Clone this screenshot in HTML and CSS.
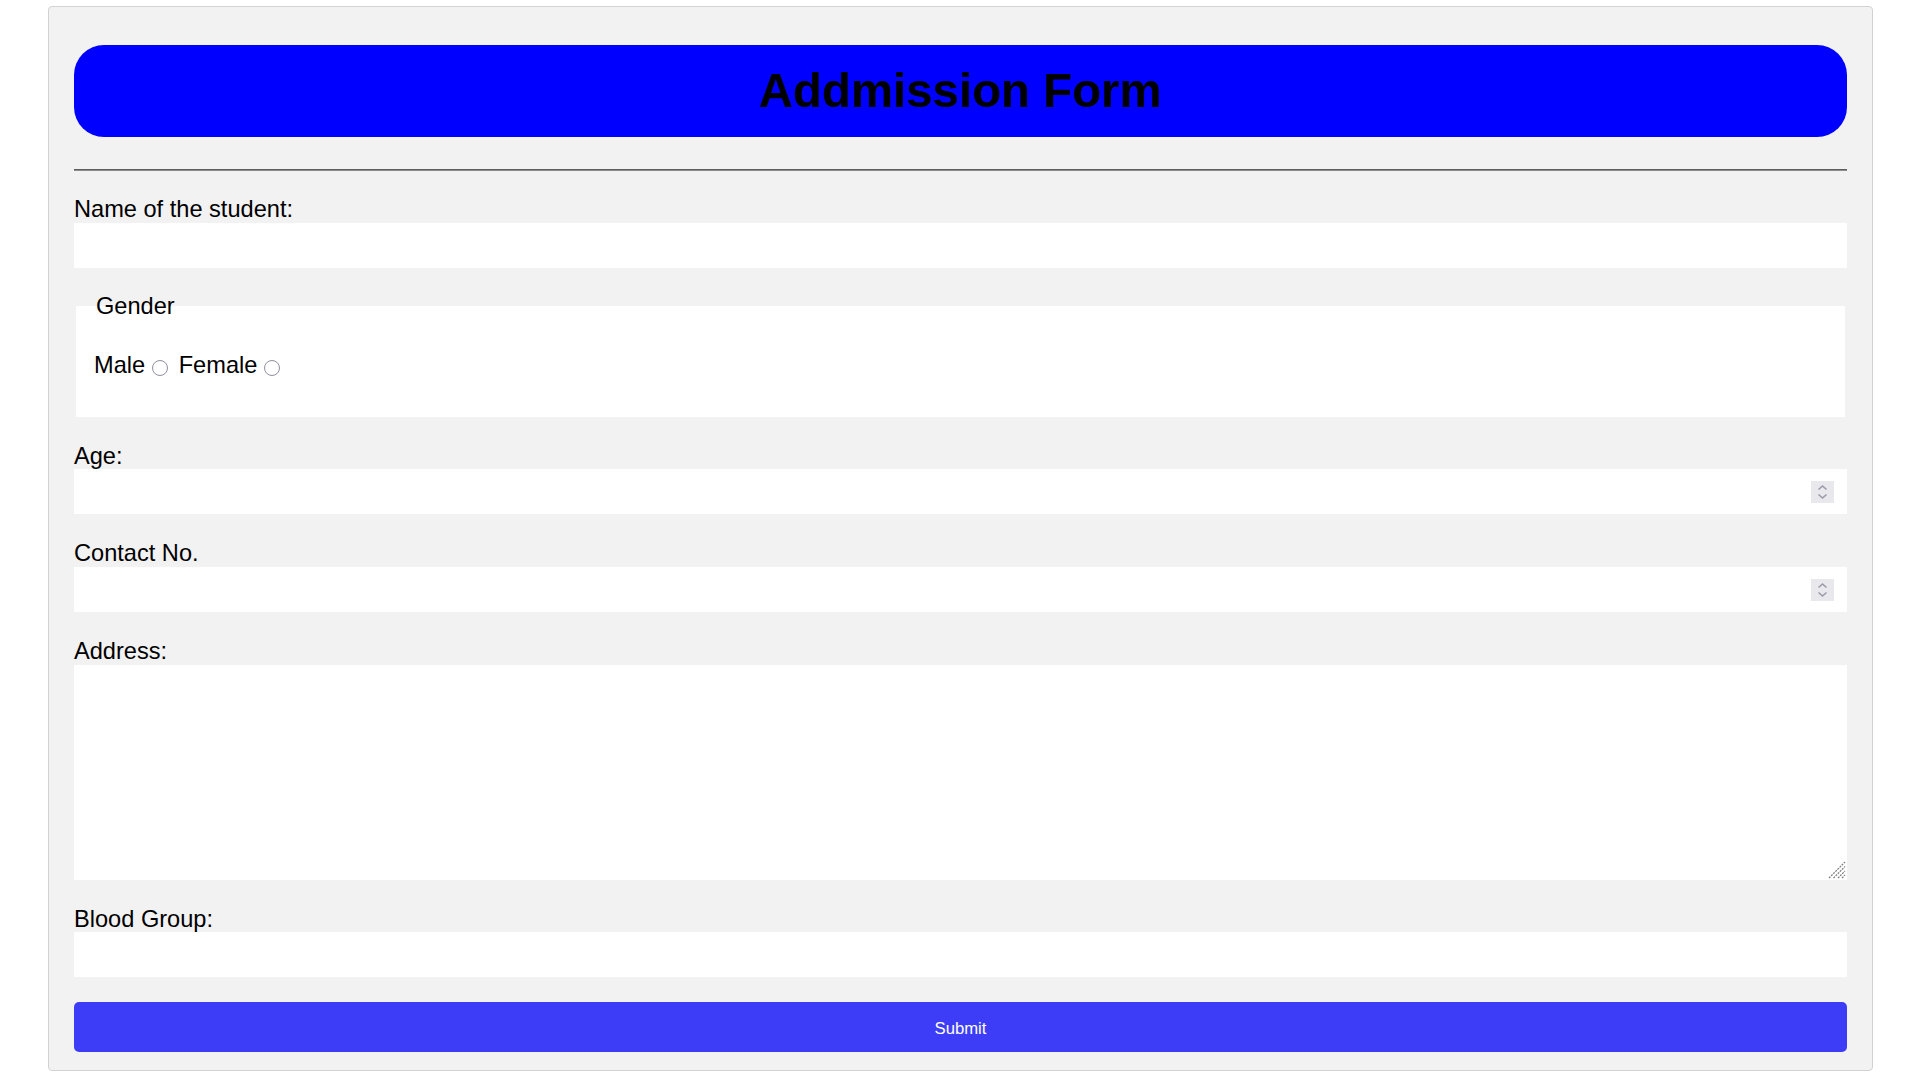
FILE: index.html
```html
<!DOCTYPE html>
<html lang="en">
<head>
<meta charset="utf-8">
<title>Addmission Form</title>
<link rel="stylesheet" href="styles.css">
</head>
<body>
<div class="container">
  <h1 class="title">Addmission Form</h1>
  <hr class="divider">
  <form class="form">
    <label class="field-label" for="name">Name of the student:</label>
    <input class="field" type="text" id="name">

    <fieldset class="gender">
      <legend class="gender-legend">Gender</legend>
      <div class="gender-row">Male<input class="radio" type="radio" name="gender" value="male"> Female<input class="radio" type="radio" name="gender" value="female"></div>
    </fieldset>

    <label class="field-label" for="age">Age:</label>
    <div class="num-wrap">
      <input class="field num" type="number" id="age">
      <span class="spin"><svg width="23" height="22" viewBox="0 0 23 22"><path d="M7.5 8.5 L11.5 5 L15.5 8.5" fill="none" stroke="#9b9ba8" stroke-width="1.6"/><path d="M7.5 13.5 L11.5 17 L15.5 13.5" fill="none" stroke="#9b9ba8" stroke-width="1.6"/></svg></span>
    </div>

    <label class="field-label" for="contact">Contact No.</label>
    <div class="num-wrap">
      <input class="field num" type="number" id="contact">
      <span class="spin"><svg width="23" height="22" viewBox="0 0 23 22"><path d="M7.5 8.5 L11.5 5 L15.5 8.5" fill="none" stroke="#9b9ba8" stroke-width="1.6"/><path d="M7.5 13.5 L11.5 17 L15.5 13.5" fill="none" stroke="#9b9ba8" stroke-width="1.6"/></svg></span>
    </div>

    <label class="field-label" for="address">Address:</label>
    <div class="area-wrap">
      <textarea class="area" id="address"></textarea>
      <span class="grip"><svg width="18" height="18" viewBox="0 0 18 18"><g stroke="#7a7a7a" stroke-width="1.2" stroke-dasharray="2 1"><path d="M1 17 L17 1"/><path d="M5.5 17 L17 5.5"/><path d="M10 17 L17 10"/><path d="M14 17 L17 14"/></g></svg></span>
    </div>

    <label class="field-label" for="blood">Blood Group:</label>
    <input class="field" type="text" id="blood">

    <button class="submit" type="submit">Submit</button>
  </form>
</div>
</body>
</html>
```
FILE: styles.css
```css
html, body {
  margin: 0;
  padding: 0;
  background: #ffffff;
}

body {
  font-family: "Liberation Sans", Arial, sans-serif;
  color: #000;
}

.container {
  box-sizing: border-box;
  width: 1825px;
  margin: 6px 0 0 48px;
  padding: 38px 25px 18px 25px;
  background: #f2f2f2;
  border: 1px solid #d2d2d2;
  border-radius: 4px;
}

.title {
  margin: 0;
  height: 92px;
  line-height: 92px;
  background: #0000ff;
  border-radius: 30px;
  text-align: center;
  font-family: "Liberation Sans", Arial, sans-serif;
  font-size: 47.4px;
  font-weight: bold;
  color: #000;
}

.divider {
  margin: 32px 0 24px 0;
  height: 0;
  border: none;
  border-top: 1px solid #5e5e5e;
  border-bottom: 1px solid #8c8c8c;
}

.form {
  margin: 0;
}

.field-label {
  display: block;
  font-size: 23.6px;
  line-height: 25.6px;
  padding-top: 2px;
}

.field {
  display: block;
  box-sizing: border-box;
  width: 100%;
  height: 45px;
  margin: 0 0 25px 0;
  border: none;
  background: #fff;
  font-family: "Liberation Sans", Arial, sans-serif;
  font-size: 20px;
  padding: 0 12px;
  outline: none;
}

.num-wrap {
  position: relative;
  margin: 0 0 25px 0;
}

.num-wrap .field {
  margin: 0;
}

.num {
  -moz-appearance: textfield;
  appearance: textfield;
}

.num::-webkit-inner-spin-button,
.num::-webkit-outer-spin-button {
  -webkit-appearance: none;
  margin: 0;
}

.spin {
  position: absolute;
  right: 13px;
  top: 12px;
  width: 23px;
  height: 22px;
  background: #e9e9ed;
  display: block;
}

.spin svg {
  display: block;
}

.gender {
  margin: 0 2px 25px 2px;
  padding: 8px 18px 17px 18px;
  border: none;
  background: #fff;
  min-width: 0;
}

.gender-legend {
  padding: 0 2px;
  font-size: 23.6px;
  line-height: 27.6px;
}

.gender-row {
  margin: 24px 0 20px 0;
  font-size: 23.6px;
  line-height: 27.6px;
}

.radio {
  -webkit-appearance: none;
  appearance: none;
  box-sizing: border-box;
  width: 16px;
  height: 16px;
  margin: 0 4px 0 7px;
  border: 1.6px solid #8f8f9d;
  border-radius: 50%;
  background: #fff;
  vertical-align: -3px;
}

.area-wrap {
  position: relative;
  margin: 0 0 25px 0;
}

.area {
  display: block;
  box-sizing: border-box;
  width: 100%;
  height: 215px;
  margin: 0;
  border: none;
  background: #fff;
  font-family: "Liberation Sans", Arial, sans-serif;
  font-size: 20px;
  padding: 8px 12px;
  outline: none;
  resize: none;
}

.grip {
  position: absolute;
  right: 1px;
  bottom: 1px;
  width: 18px;
  height: 18px;
  display: block;
}

.grip svg {
  display: block;
}

.submit {
  display: block;
  width: 100%;
  height: 50px;
  margin: 0;
  padding: 3px 0 0 0;
  border: none;
  border-radius: 5px;
  background: #3d3df7;
  color: #fff;
  font-family: "Liberation Sans", Arial, sans-serif;
  font-size: 16.7px;
  cursor: pointer;
}
```
